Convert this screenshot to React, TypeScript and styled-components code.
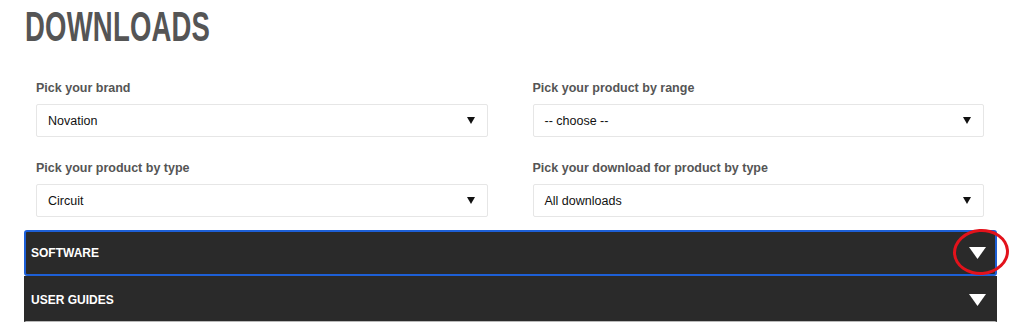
import React from 'react'
import styled, { createGlobalStyle } from 'styled-components'

const GlobalStyle = createGlobalStyle`
body {
  margin: 0;
  background: #ffffff;
  font-family: "Liberation Sans", Arial, Helvetica, sans-serif;
}
`;

const Page = styled.div`
width: 1024px;
height: 336px;
padding: 0 27px 0 24px;
box-sizing: border-box;
overflow: hidden;
`;

const Heading = styled.h1`
margin: 6px 0 0 1px;
font-size: 42px;
line-height: 42px;
font-weight: 700;
color: #555555;
letter-spacing: 0.3px;
transform: scaleX(0.655);
transform-origin: left center;
white-space: nowrap;
`;

const FilterGrid = styled.div`
display: grid;
grid-template-columns: 1fr 1fr;
column-gap: 45px;
row-gap: 23px;
margin-top: 32px;
padding: 0 13px 0 12px;
`;

const Field = styled.div`
display: flex;
flex-direction: column;
`;

const Label = styled.label`
font-size: 12.5px;
line-height: 16px;
font-weight: 700;
color: #555555;
margin-bottom: 8px;
`;

const SelectBox = styled.div`
height: 33px;
box-sizing: border-box;
display: flex;
align-items: center;
justify-content: space-between;
padding: 0 12px 0 11px;
border: 1px solid #e6e6e6;
border-radius: 2px;
background: #ffffff;
font-size: 12.5px;
color: #111111;
`;

const Accordion = styled.div`
margin-top: 13px;
display: flex;
flex-direction: column;
`;

const Bar = styled.div<{ $active?: boolean }>`
position: relative;
height: 46px;
box-sizing: border-box;
display: flex;
align-items: center;
justify-content: space-between;
padding: 0 9px 0 5px;
background: #2a2a2a;
border: 2px solid ${p => (p.$active ? '#1d5fd6' : '#2a2a2a')};
border-radius: ${p => (p.$active ? '3px' : '0')};
border-bottom-color: ${p => (p.$active ? '#1d5fd6' : '#b9b9b9')};
border-bottom-width: ${p => (p.$active ? '2px' : '1px')};
color: #ffffff;
font-size: 12px;
font-weight: 700;
text-transform: uppercase;
`;

const Highlight = styled.span`
position: absolute;
left: 927px;
top: -3px;
width: 50px;
height: 40px;
border: 3px solid #e3121b;
border-radius: 50%;
transform: rotate(-4deg);
pointer-events: none;
`;

const SmallArrow = () => (
  <svg width="8" height="7" viewBox="0 0 8 7">
    <polygon points="0,0 8,0 4,7" fill="#111111" />
  </svg>
);

const BigArrow = () => (
  <svg width="17" height="12" viewBox="0 0 17 12">
    <polygon points="0,0 17,0 8.5,12" fill="#ffffff" />
  </svg>
);

const filters = [
  { label: 'Pick your brand', value: 'Novation' },
  { label: 'Pick your product by range', value: '-- choose --' },
  { label: 'Pick your product by type', value: 'Circuit' },
  { label: 'Pick your download for product by type', value: 'All downloads' },
];

const sections = [
  { title: 'Software', active: true },
  { title: 'User Guides', active: false },
];

export default function App() {
  return (
    <Page>
      <GlobalStyle />
      <Heading>DOWNLOADS</Heading>
      <FilterGrid>
        {filters.map(f => (
          <Field key={f.label}>
            <Label>{f.label}</Label>
            <SelectBox>
              <span>{f.value}</span>
              <SmallArrow />
            </SelectBox>
          </Field>
        ))}
      </FilterGrid>
      <Accordion>
        {sections.map(s => (
          <Bar key={s.title} $active={s.active}>
            <span>{s.title}</span>
            <BigArrow />
            {s.active && <Highlight />}
          </Bar>
        ))}
      </Accordion>
    </Page>
  );
}
